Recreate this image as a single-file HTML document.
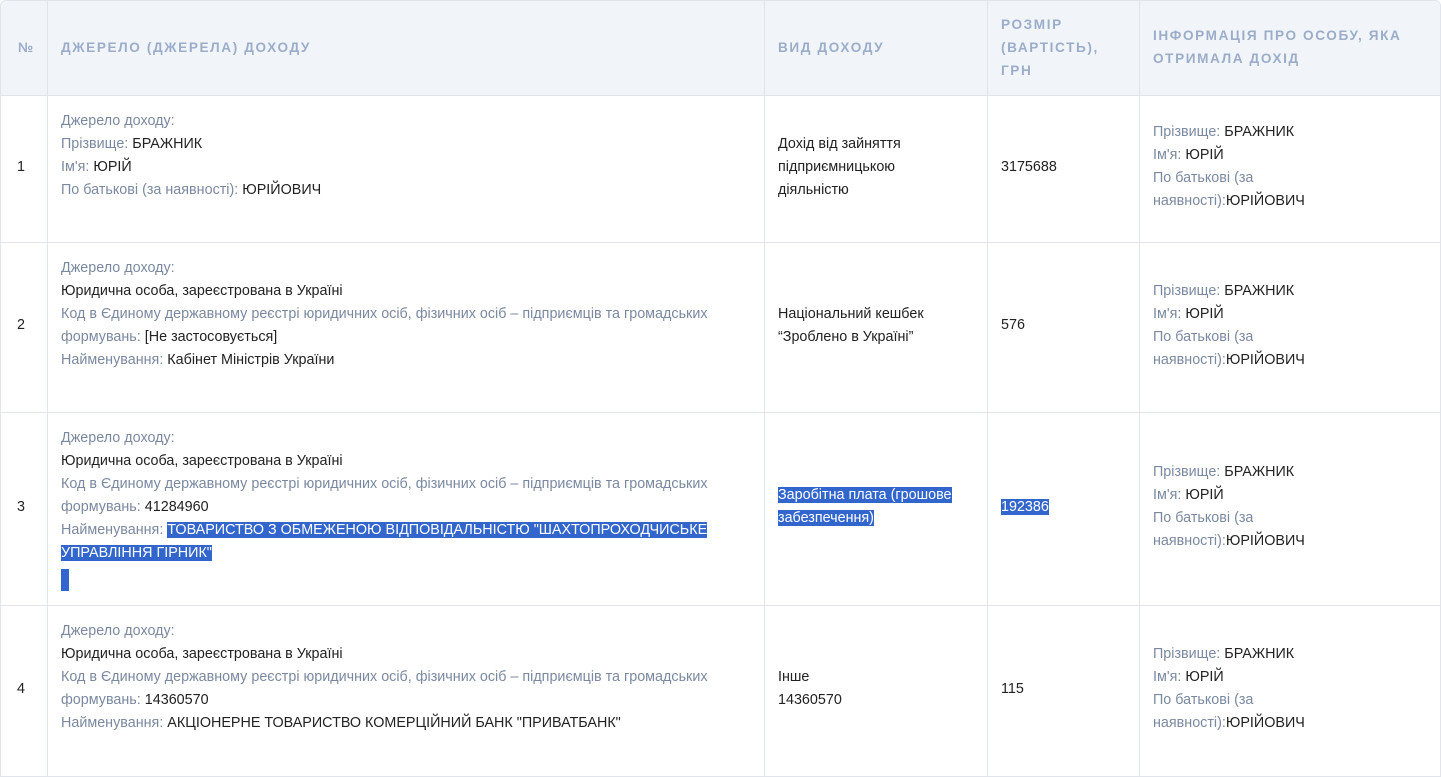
<!DOCTYPE html>
<html><head><meta charset="utf-8"><style>
html,body{margin:0;padding:0;background:#fff;width:1441px;height:777px;overflow:hidden}
body{font-family:"Liberation Sans",Arial,sans-serif;font-size:14.35px;color:#222}
table{border-collapse:separate;border-spacing:0;table-layout:fixed;width:1441px;position:absolute;left:0;top:0;border:1px solid #e1e5eb;border-top-right-radius:6px;border-top-left-radius:6px}
td,th{border-right:1px solid #e1e5eb;border-bottom:1px solid #e1e5eb;line-height:23px;padding:0 12px 4px 13px;vertical-align:middle;text-align:left}
tr td:last-child,tr th:last-child{border-right:none}
tr:last-child td{border-bottom:none}
th{background:#f1f5fa;color:#9cadc9;font-size:13.6px;font-weight:bold;letter-spacing:1.6px;height:92px;padding-top:0;padding-bottom:2px;white-space:nowrap}
th:last-child{border-top-right-radius:6px}
th:first-child{border-top-left-radius:6px}
td.src{vertical-align:top;padding-top:14px}
.l{color:#7b89a0}
.n{padding-left:16px}
.s{background:#3366cc;color:#fff}
.blk{display:inline-block;width:8px;height:22px;background:#3366cc;vertical-align:top;margin-top:4px}
</style></head><body>
<table>
<colgroup><col style="width:47px"><col style="width:717px"><col style="width:223px"><col style="width:152px"><col></colgroup>
<tr><th class="n" style="padding-left:17px;letter-spacing:0">№</th><th>ДЖЕРЕЛО (ДЖЕРЕЛА) ДОХОДУ</th><th>ВИД ДОХОДУ</th><th>РОЗМІР<br>(ВАРТІСТЬ),<br>ГРН</th><th>ІНФОРМАЦІЯ ПРО ОСОБУ, ЯКА<br>ОТРИМАЛА ДОХІД</th></tr>
<tr style="height:147px"><td class="n">1</td><td class="src"><span class="l">Джерело доходу:</span><br><span class="l">Прізвище: </span>БРАЖНИК<br><span class="l">Ім'я: </span>ЮРІЙ<br><span class="l">По батькові (за наявності): </span>ЮРІЙОВИЧ</td><td>Дохід від зайняття<br>підприємницькою<br>діяльністю</td><td>3175688</td><td><span class="l">Прізвище: </span>БРАЖНИК<br><span class="l">Ім'я: </span>ЮРІЙ<br><span class="l">По батькові (за<br>наявності):</span>ЮРІЙОВИЧ</td></tr>
<tr style="height:170px"><td class="n">2</td><td class="src"><span class="l">Джерело доходу:</span><br>Юридична особа, зареєстрована в Україні<br><span class="l">Код в Єдиному державному реєстрі юридичних осіб, фізичних осіб – підприємців та громадських<br>формувань: </span>[Не застосовується]<br><span class="l">Найменування: </span>Кабінет Міністрів України</td><td>Національний кешбек<br>“Зроблено в Україні”</td><td>576</td><td><span class="l">Прізвище: </span>БРАЖНИК<br><span class="l">Ім'я: </span>ЮРІЙ<br><span class="l">По батькові (за<br>наявності):</span>ЮРІЙОВИЧ</td></tr>
<tr style="height:193px"><td class="n">3</td><td class="src"><span class="l">Джерело доходу:</span><br>Юридична особа, зареєстрована в Україні<br><span class="l">Код в Єдиному державному реєстрі юридичних осіб, фізичних осіб – підприємців та громадських<br>формувань: </span>41284960<br><span class="l">Найменування: </span><span class="s">ТОВАРИСТВО З ОБМЕЖЕНОЮ ВІДПОВІДАЛЬНІСТЮ "ШАХТОПРОХОДЧИСЬКЕ<br>УПРАВЛІННЯ ГІРНИК"</span><br><span class="blk"></span></td><td><span class="s">Заробітна плата (грошове<br>забезпечення)</span></td><td><span class="s">192386</span></td><td><span class="l">Прізвище: </span>БРАЖНИК<br><span class="l">Ім'я: </span>ЮРІЙ<br><span class="l">По батькові (за<br>наявності):</span>ЮРІЙОВИЧ</td></tr>
<tr style="height:170px"><td class="n">4</td><td class="src"><span class="l">Джерело доходу:</span><br>Юридична особа, зареєстрована в Україні<br><span class="l">Код в Єдиному державному реєстрі юридичних осіб, фізичних осіб – підприємців та громадських<br>формувань: </span>14360570<br><span class="l">Найменування: </span>АКЦІОНЕРНЕ ТОВАРИСТВО КОМЕРЦІЙНИЙ БАНК "ПРИВАТБАНК"</td><td>Інше<br>14360570</td><td>115</td><td><span class="l">Прізвище: </span>БРАЖНИК<br><span class="l">Ім'я: </span>ЮРІЙ<br><span class="l">По батькові (за<br>наявності):</span>ЮРІЙОВИЧ</td></tr>
</table>
</body></html>
